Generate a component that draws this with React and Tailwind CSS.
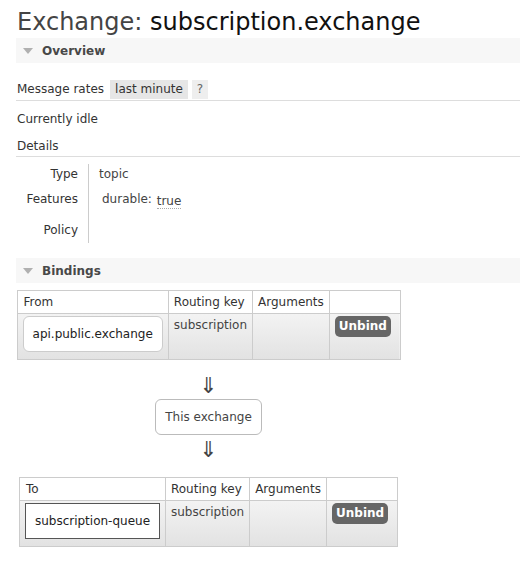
import React from "react";

const font = { fontFamily: '"DejaVu Sans", Verdana, sans-serif' };

const SectionHeader = ({ title }) => (
  <div className="flex items-center h-[25px] bg-[#f7f7f7] pl-[7px]">
    <svg width="10" height="6" viewBox="0 0 10 6" className="mr-[9px]">
      <path d="M0 0 L10 0 L5 6 Z" fill="#b0b0b0" />
    </svg>
    <span className="font-bold text-[12px] text-[#484848]">{title}</span>
  </div>
);

const UnbindButton = () => (
  <button className="bg-[#666] text-white font-bold text-[12px] rounded-[5px] w-[56px] h-[21px] leading-[21px]">
    Unbind
  </button>
);

const BindingTable = ({ label, name, widths, boxClass, tableWidth }) => (
  <table
    className="border-collapse text-[12px] text-[#333] mx-auto"
    style={{ width: tableWidth }}
  >
    <thead>
      <tr className="h-[23px] bg-white">
        <th className="border border-[#ccc] text-left font-normal px-[6px]" style={{ width: widths[0] }}>
          {label}
        </th>
        <th className="border border-[#ccc] text-left font-normal px-[5px]" style={{ width: widths[1] }}>
          Routing key
        </th>
        <th className="border border-[#ccc] text-left font-normal px-[5px]" style={{ width: widths[2] }}>
          Arguments
        </th>
        <th className="border border-[#ccc]" style={{ width: widths[3] }}></th>
      </tr>
    </thead>
    <tbody>
      <tr className="h-[46px] bg-gradient-to-b from-[#f3f3f3] to-[#e2e2e2]">
        <td className="border border-[#ccc] px-[5px] py-[2px] align-top">
          <div className={`bg-white h-[36px] flex items-center justify-center text-[#222] ${boxClass}`}>
            {name}
          </div>
        </td>
        <td className="border border-[#ccc] px-[5px] pt-[2px] align-top text-[#444]">subscription</td>
        <td className="border border-[#ccc]"></td>
        <td className="border border-[#ccc] px-[5px] pt-[2px] align-top">
          <UnbindButton />
        </td>
      </tr>
    </tbody>
  </table>
);

export default function App() {
  return (
    <div className="bg-white min-h-[561px] pl-4 text-[12px] text-[#333]" style={font}>
      <h1 className="text-[24px] leading-[32px] pt-[6px] pl-px text-[#444]">
        Exchange: <span className="text-[#111]">subscription.exchange</span>
      </h1>

      <SectionHeader title="Overview" />

      <div className="mt-[16px] flex items-center h-[20px] border-b border-[#ddd] pb-[1px] box-content">
        <span className="pl-px mr-[6px]">Message rates</span>
        <span className="bg-[#e6e6e6] px-[5px] h-[19px] leading-[19px]">last minute</span>
        <span className="bg-[#eeeeee] ml-[4px] px-[5px] h-[19px] leading-[19px] text-[#666]">?</span>
      </div>

      <div className="mt-[10px] pl-px h-[16px] leading-[16px]">Currently idle</div>

      <div className="mt-[11px] pl-px h-[16px] leading-[16px] border-b border-[#ddd] pb-[2px] box-content">
        Details
      </div>

      {/* details table */}
      <div className="flex mt-[7px]">
        <div className="w-[72px] flex flex-col items-end pr-[10px] text-[#333]">
          <div className="h-[25px] pt-[1px]">Type</div>
          <div className="h-[31px] pt-[1px]">Features</div>
          <div className="h-[28px] pt-[1px]">Policy</div>
        </div>
        <div className="border-l border-[#ccc] mt-[3px] h-[79px] pl-[10px] -translate-y-[3px]">
          <div className="h-[25px] pt-[1px] text-[#444]">topic</div>
          <div className="h-[31px] pt-[1px] pl-[3px] text-[#444]">
            durable:{" "}
            <span className="inline-block translate-y-[2px] border-b border-dotted border-[#aaa] leading-[14px] ml-[1px]">
              true
            </span>
          </div>
          <div className="h-[23px]"></div>
        </div>
      </div>

      <div className="mt-[10px]">
        <SectionHeader title="Bindings" />
      </div>

      <div className="w-[385px] mt-[7px]">
        <BindingTable
          label="From"
          name="api.public.exchange"
          widths={[153, 84, 76, 71]}
          tableWidth={384}
          boxClass="rounded-[6px] border border-[#ccc]"
        />

        <div className="flex flex-col items-center">
          <div className="text-[22px] leading-[22px] mt-[15px] text-[#444]">⇓</div>
          <div className="mt-[2px] w-[107px] h-[36px] border border-[#bbb] rounded-[6px] flex items-center justify-center text-[#444]">
            This exchange
          </div>
          <div className="text-[22px] leading-[22px] mt-[4px] text-[#444]">⇓</div>
        </div>

        <div className="mt-[16px]">
          <BindingTable
            label="To"
            name="subscription-queue"
            widths={[148, 83, 77, 71]}
            tableWidth={379}
            boxClass="border border-[#555]"
          />
        </div>
      </div>
    </div>
  );
}
